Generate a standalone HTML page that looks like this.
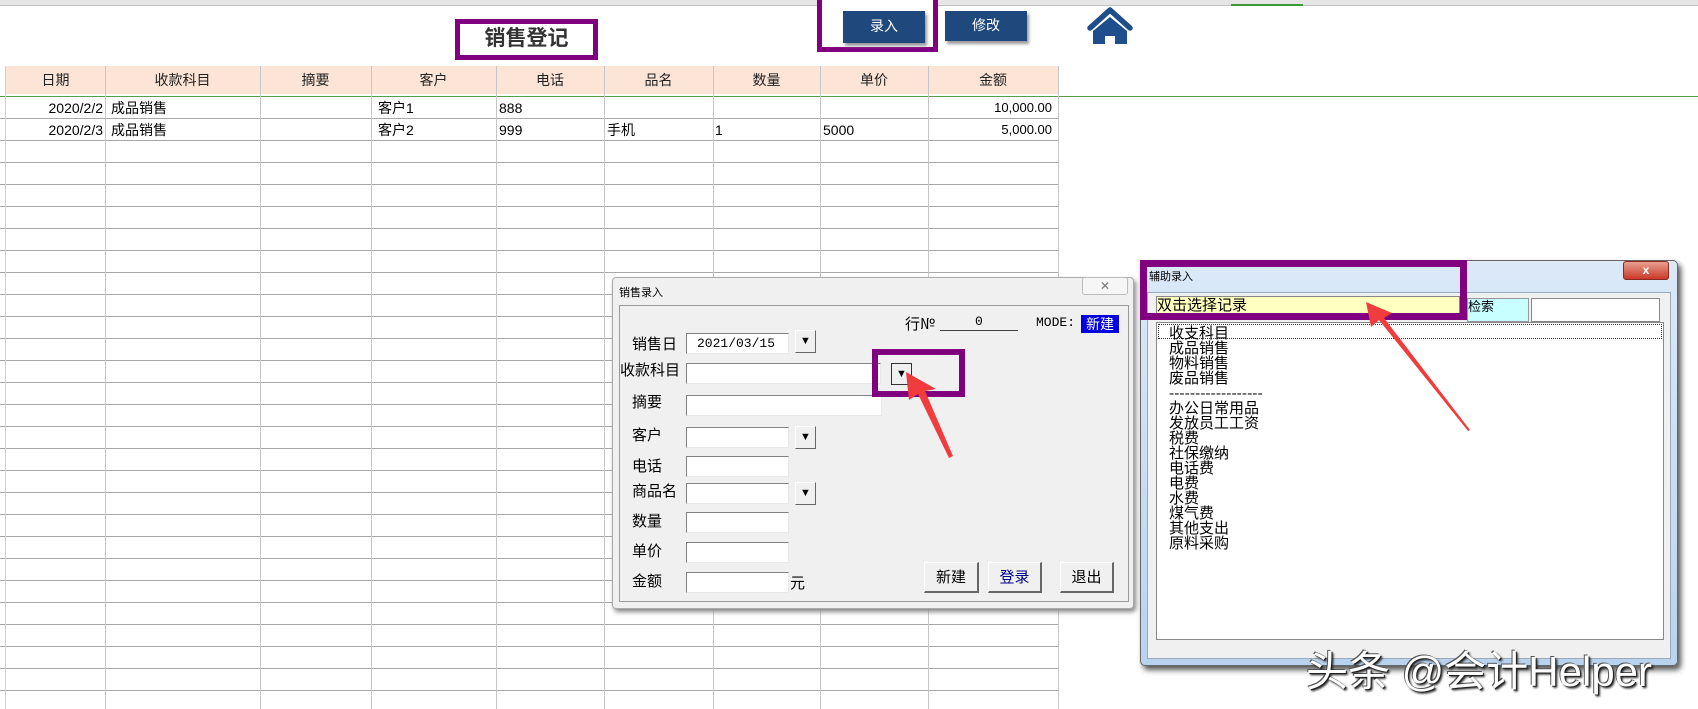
<!DOCTYPE html>
<html><head><meta charset="utf-8"><style>
*{margin:0;padding:0;box-sizing:border-box}
body{width:1698px;height:709px;position:relative;overflow:hidden;background:#fff;font-family:"Liberation Sans","Noto Sans CJK SC",sans-serif;}
.a{position:absolute}
.vl{position:absolute;top:66px;bottom:0;width:1px;background:#c6c6c6}
.hd{position:absolute;top:66px;height:28px;line-height:28px;text-align:center;font-size:14px;color:#222}
.cell{position:absolute;font-size:14px;color:#000;line-height:22px}
.lab{position:absolute;font-size:15px;color:#000;font-family:"Noto Sans CJK SC",sans-serif}
.in{position:absolute;background:#fff;border-top:1px solid #808080;border-left:1px solid #808080;border-bottom:1px solid #e8e8e8;border-right:1px solid #e8e8e8;height:21px}
.dd{position:absolute;width:21px;height:23px;background:#f0f0f0;border:1px solid #fff;border-right-color:#666;border-bottom-color:#666;font-size:11px;text-align:center;line-height:21px}
.btn{position:absolute;height:31px;background:#f0f0f0;border:1px solid #fff;border-right:2px solid #666;border-bottom:2px solid #666;font-size:15px;text-align:center;line-height:28px;font-family:"Noto Sans CJK SC",sans-serif}
.li{font-size:15px;line-height:15px;height:15px;font-family:"Noto Sans CJK SC",sans-serif}
</style></head><body>
<div class="a" style="left:0;top:0;width:1698px;height:6px;background:#e6e6e6;border-bottom:1px solid #c0c0c0"></div>
<div class="a" style="left:1231px;top:4px;width:72px;height:2px;background:#3a9a3a"></div>
<div class="a" style="left:6px;top:66px;width:1052px;height:28px;background:#fce4d6"></div>
<div class="a" style="left:0;top:96px;width:1698px;height:1px;background:#5a9a4a"></div>
<div class="a" style="left:0;top:97px;width:1058px;height:612px;background:repeating-linear-gradient(to bottom,transparent 0,transparent 21px,#a8a8a8 21px,#a8a8a8 22px)"></div>
<div class="vl" style="left:5px;background:#d0d0d0"></div>
<div class="vl" style="left:105px"></div><div class="vl" style="left:260px"></div><div class="vl" style="left:371px"></div><div class="vl" style="left:496px"></div><div class="vl" style="left:604px"></div><div class="vl" style="left:713px"></div><div class="vl" style="left:820px"></div><div class="vl" style="left:928px"></div><div class="vl" style="left:1058px"></div>
<div class="hd" style="left:6px;width:99px">日期</div>
<div class="hd" style="left:105px;width:155px">收款科目</div>
<div class="hd" style="left:260px;width:111px">摘要</div>
<div class="hd" style="left:371px;width:125px">客户</div>
<div class="hd" style="left:496px;width:108px">电话</div>
<div class="hd" style="left:604px;width:109px">品名</div>
<div class="hd" style="left:713px;width:107px">数量</div>
<div class="hd" style="left:820px;width:108px">单价</div>
<div class="hd" style="left:928px;width:130px">金额</div>
<div class="cell" style="left:6px;width:97px;top:97px;text-align:right">2020/2/2</div>
<div class="cell" style="left:111px;top:97px">成品销售</div>
<div class="cell" style="left:378px;top:97px">客户1</div>
<div class="cell" style="left:499px;top:97px">888</div>
<div class="cell" style="left:928px;width:124px;top:97px;text-align:right;font-size:13px">10,000.00</div>
<div class="cell" style="left:6px;width:97px;top:119px;text-align:right">2020/2/3</div>
<div class="cell" style="left:111px;top:119px">成品销售</div>
<div class="cell" style="left:378px;top:119px">客户2</div>
<div class="cell" style="left:499px;top:119px">999</div>
<div class="cell" style="left:607px;top:119px">手机</div>
<div class="cell" style="left:715px;top:119px">1</div>
<div class="cell" style="left:823px;top:119px">5000</div>
<div class="cell" style="left:928px;width:124px;top:119px;text-align:right;font-size:13px">5,000.00</div>
<div class="a" style="left:455px;top:19px;width:143px;height:41px;border:5px solid #800080;background:#fff;text-align:center;font-size:21px;font-weight:bold;line-height:30px;color:#333">销售登记</div>
<div class="a" style="left:817px;top:0;width:121px;height:52px;border:5px solid #800080;border-top:none;background:#fff"></div>
<div class="a" style="left:843px;top:11px;width:82px;height:32px;background:#1f497d;color:#fff;text-align:center;line-height:30px;font-size:14px;box-shadow:2px 3px 3px #999">录入</div>
<div class="a" style="left:945px;top:11px;width:82px;height:30px;background:#1f497d;color:#fff;text-align:center;line-height:28px;font-size:14px;box-shadow:2px 3px 3px #999">修改</div>
<svg class="a" style="left:1086px;top:6px" width="48" height="38" viewBox="0 0 48 38"><path d="M4 22 L24 4 L44 22" fill="none" stroke="#1f4e8c" stroke-width="5.5" stroke-linecap="round" stroke-linejoin="round"/><path d="M7 25 L24 11 L41 25 V38 H29 V30 H19 V38 H7 Z" fill="#1f4e8c"/></svg>

<div class="a" style="left:612px;top:277px;width:522px;height:332px;background:#f0f0f0;border:1px solid #aaa;border-radius:4px;box-shadow:2px 3px 5px #888"></div>
<div class="a" style="left:619px;top:284px;font-size:11px">销售录入</div>
<div class="a" style="left:1082px;top:277px;width:46px;height:18px;border:1px solid #bbb;border-radius:3px;background:#f6f6f6;text-align:center;font-size:12px;color:#777;line-height:16px">✕</div>
<div class="a" style="left:619px;top:305px;width:510px;height:297px;border:1px solid #999;background:#f0f0f0"></div>
<div class="a" style="left:905px;top:313px;font-size:15px;font-family:'Noto Sans CJK SC',sans-serif">行№</div>
<div class="a" style="left:940px;top:330px;width:78px;height:1px;background:#444"></div>
<div class="a" style="left:975px;top:314px;font-size:13px;font-family:'Liberation Mono',monospace">0</div>
<div class="a" style="left:1036px;top:315px;font-size:13px;font-family:'Liberation Mono',monospace">MODE:</div>
<div class="a" style="left:1081px;top:315px;width:38px;height:18px;background:#0000e0;color:#fff;font-size:14px;line-height:18px;text-align:center">新建</div>
<div class="lab" style="left:632px;top:333px">销售日</div>
<div class="in" style="left:686px;top:333px;width:103px;font-size:13px;font-family:'Liberation Mono',monospace;padding-left:10px;line-height:20px">2021/03/15</div>
<div class="dd" style="left:795px;top:330px">▼</div>
<div class="lab" style="left:620px;top:359px">收款科目</div>
<div class="in" style="left:686px;top:363px;width:195px"></div>
<div class="lab" style="left:632px;top:391px">摘要</div>
<div class="in" style="left:686px;top:395px;width:196px"></div>
<div class="lab" style="left:632px;top:424px">客户</div>
<div class="in" style="left:686px;top:427px;width:103px"></div>
<div class="dd" style="left:795px;top:426px">▼</div>
<div class="lab" style="left:632px;top:455px">电话</div>
<div class="in" style="left:686px;top:456px;width:103px"></div>
<div class="lab" style="left:632px;top:480px">商品名</div>
<div class="in" style="left:686px;top:483px;width:103px"></div>
<div class="dd" style="left:795px;top:482px">▼</div>
<div class="lab" style="left:632px;top:510px">数量</div>
<div class="in" style="left:686px;top:512px;width:103px"></div>
<div class="lab" style="left:632px;top:540px">单价</div>
<div class="in" style="left:686px;top:542px;width:103px"></div>
<div class="lab" style="left:632px;top:570px">金额</div>
<div class="in" style="left:686px;top:572px;width:103px"></div>
<div class="lab" style="left:790px;top:572px">元</div>
<div class="btn" style="left:924px;top:562px;width:55px">新建</div>
<div class="btn" style="left:988px;top:562px;width:54px;color:#00008b">登录</div>
<div class="btn" style="left:1060px;top:562px;width:54px">退出</div>
<div class="a" style="left:872px;top:349px;width:93px;height:48px;border:6px solid #800080"></div>
<div class="a" style="left:891px;top:363px;width:21px;height:22px;background:#f0f0f0;border:1px solid #333;font-size:11px;text-align:center;line-height:20px">▼</div>
<svg class="a" style="left:0;top:0" width="1698" height="709"><polygon points="906,372 936,389 925,391 953,456 949,458 918,394 909,400" fill="#f03c3c"/></svg>

<div class="a" style="left:1140px;top:260px;width:538px;height:406px;background:linear-gradient(#dbe9f8,#c6dcf3 60%,#b9d3ef);border:1px solid #666;border-radius:5px;box-shadow:3px 4px 6px #555"></div>
<div class="a" style="left:1623px;top:261px;width:46px;height:19px;background:linear-gradient(#e9a090,#c8382a);border:1px solid #8a2a20;border-radius:3px;color:#fff;text-align:center;font-size:12px;font-weight:bold;line-height:17px">x</div>
<div class="a" style="left:1147px;top:292px;width:524px;height:367px;background:#f0f0f0;border:1px solid #9ab"></div>
<div class="a" style="left:1156px;top:296px;width:304px;height:18px;background:#ffffc0;border:1px solid #888;font-size:15px;line-height:16px;font-family:'Noto Sans CJK SC',sans-serif">双击选择记录</div>
<div class="a" style="left:1467px;top:298px;width:62px;height:24px;background:#c8ffff;border:1px solid #999;font-size:13px;line-height:16px">检索</div>
<div class="a" style="left:1531px;top:298px;width:129px;height:24px;background:#fff;border:1px solid #888"></div>
<div class="a" style="left:1156px;top:322px;width:508px;height:318px;background:#fff;border:1px solid #888"></div>
<div class="a" style="left:1158px;top:324px;width:504px;height:15px;border:1px dotted #333"></div>
<div class="a" style="left:1169px;top:325px">
<div class="li">收支科目</div><div class="li">成品销售</div><div class="li">物料销售</div><div class="li">废品销售</div><div class="li">------------------</div><div class="li">办公日常用品</div><div class="li">发放员工工资</div><div class="li">税费</div><div class="li">社保缴纳</div><div class="li">电话费</div><div class="li">电费</div><div class="li">水费</div><div class="li">煤气费</div><div class="li">其他支出</div><div class="li">原料采购</div>
</div>
<div class="a" style="left:1140px;top:260px;width:327px;height:60px;border:7px solid #800080"></div>
<div class="a" style="left:1149px;top:268px;font-size:11px">辅助录入</div>
<svg class="a" style="left:0;top:0" width="1698" height="709"><polygon points="1366,302 1392,313 1384,318 1470,430 1468,431 1379,320 1371,327" fill="#f03c3c"/></svg>
<div class="a" style="left:1306px;top:638px;font-size:42px;color:#fff;text-shadow:1px 1px 0 #222,2px 2px 2px #222,-1px -1px 0 #555;font-family:'Liberation Sans','Noto Sans CJK SC',sans-serif;white-space:nowrap">头条 @会计Helper</div>
</body></html>
